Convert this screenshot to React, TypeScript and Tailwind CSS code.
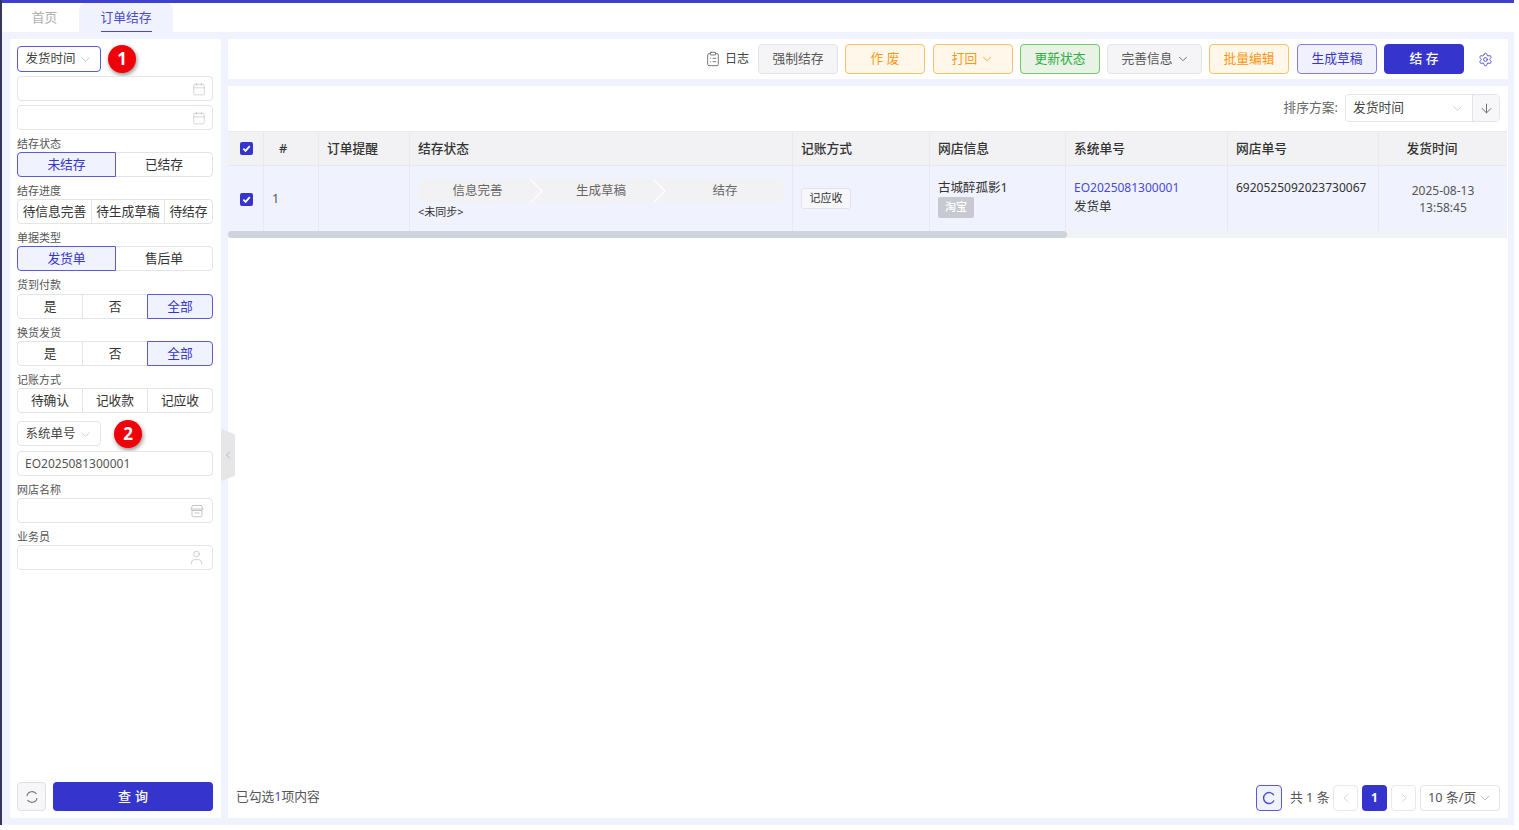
import React from 'react';
import { Calendar, ChevronDown, ChevronLeft, ChevronRight, ArrowDown, Settings, ClipboardList, User } from 'lucide-react';

const FONT = "font-['Noto_Sans','Noto_Sans_CJK_SC',sans-serif]";

const Label: React.FC<{ text: string; cls?: string }> = ({ text, cls }) => (
  <div className={`h-[22px] pt-[7px] text-[11px] leading-[14px] text-[#555] ${cls || ''}`}>{text}</div>
);

interface SegItem {
  text: string;
  width: string;
  active?: boolean;
}

const Segment: React.FC<{ items: SegItem[] }> = ({ items }) => (
  <div className="flex h-[25px] w-[196px] shrink-0">
    {items.map((item, i) => (
      <div
        key={item.text}
        className={`flex items-center justify-center text-[12.75px] border ${item.width} ${i > 0 ? '-ml-px' : ''} ${i === 0 ? 'rounded-l-[4px]' : ''} ${i === items.length - 1 ? 'rounded-r-[4px]' : ''} ${item.active ? 'relative z-10 bg-[#f0f2fe] border-[#5a5ad8] text-[#3535cd]' : 'bg-white border-[#e3e4ea] text-[#333]'}`}
      >
        {item.text}
      </div>
    ))}
  </div>
);

const Field: React.FC<{ children?: React.ReactNode; value?: string }> = ({ children, value }) => (
  <div className="flex h-[25px] w-[196px] shrink-0 items-center justify-between rounded-[4px] border border-[#e3e4ea] bg-white pl-[7px] pr-[8px] text-[12px] text-[#555]">
    <span>{value}</span>
    {children}
  </div>
);

const Badge: React.FC<{ n: string }> = ({ n }) => (
  <div className="flex h-[28px] w-[28px] items-center justify-center rounded-full bg-[#f00008] text-[17px] font-bold text-white shadow-[1px_2px_4px_rgba(0,0,0,0.45)]">
    {n}
  </div>
);

const Btn: React.FC<{ text: string; cls: string; w: string; arrow?: boolean }> = ({ text, cls, w, arrow }) => (
  <div className={`flex h-[30px] items-center justify-center gap-[3px] rounded-[4px] border text-[12.75px] ${w} ${cls}`}>
    {text}
    {arrow && <ChevronDown size={14} strokeWidth={1.4} />}
  </div>
);

const orange = 'bg-[#fff8ea] border-[#ffbf60] text-[#ff9610]';
const gray = 'bg-[#f5f5f7] border-[#e3e4e8] text-[#555]';

const CheckBox: React.FC = () => (
  <div className="flex h-[13px] w-[13px] items-center justify-center rounded-[2px] bg-[#3535cd]">
    <svg width="9" height="9" viewBox="0 0 10 10" fill="none" stroke="white" strokeWidth="2">
      <path d="M1.5 5.2 L4 7.6 L8.6 2.4" />
    </svg>
  </div>
);

const COLS = 'grid grid-cols-[35px_55px_91px_383px_137px_136px_162px_151px_129px]';

const HeadCell: React.FC<{ children: React.ReactNode; cls?: string }> = ({ children, cls }) => (
  <div className={`flex items-center border-l border-[#e8e8ee] pl-2 text-[12.75px] font-medium text-[#333] ${cls || ''}`}>{children}</div>
);

const Cell: React.FC<{ children?: React.ReactNode; cls?: string }> = ({ children, cls }) => (
  <div className={`border-l border-[#e6e8f4] px-2 text-[12.5px] text-[#333] ${cls || ''}`}>{children}</div>
);

const StepSep: React.FC = () => (
  <svg className="absolute top-0 -right-[6px] z-10" width="13" height="24" viewBox="0 0 13 24" fill="none" stroke="#ffffff" strokeWidth="1.2">
    <path d="M0 0 L12 12 L0 24" />
  </svg>
);

const Sidebar: React.FC = () => (
  <aside className="flex w-[211px] shrink-0 flex-col bg-white px-[7px] pt-[7px] pb-[7px]">
    <div className="flex items-center gap-[7px] h-[26px] shrink-0">
      <div className="flex h-[26px] w-[84px] items-center justify-center gap-[2px] rounded-[4px] border border-[#5a5ad8] bg-white text-[12.5px] text-[#444]">
        发货时间 <ChevronDown size={15} strokeWidth={1.1} className="text-[#aaa]" />
      </div>
      <Badge n="1" />
    </div>
    <div className="mt-1"><Field><Calendar size={14} strokeWidth={1.2} className="-mr-[2px] text-[#c4c4c4]" /></Field></div>
    <div className="mt-1"><Field><Calendar size={14} strokeWidth={1.2} className="-mr-[2px] text-[#c4c4c4]" /></Field></div>
    <Label text="结存状态" cls="pt-[6px]" />
    <Segment items={[{ text: '未结存', width: 'w-[99px]', active: true }, { text: '已结存', width: 'w-[98px]' }]} />
    <Label text="结存进度" cls="pt-[6px]" />
    <Segment items={[{ text: '待信息完善', width: 'w-[75px]' }, { text: '待生成草稿', width: 'w-[74px]' }, { text: '待结存', width: 'w-[49px]' }]} />
    <Label text="单据类型" />
    <Segment items={[{ text: '发货单', width: 'w-[99px]', active: true }, { text: '售后单', width: 'w-[98px]' }]} />
    <Label text="货到付款" cls="h-[23px]" />
    <Segment items={[{ text: '是', width: 'w-[66px]' }, { text: '否', width: 'w-[66px]' }, { text: '全部', width: 'w-[66px]', active: true }]} />
    <Label text="换货发货" />
    <Segment items={[{ text: '是', width: 'w-[66px]' }, { text: '否', width: 'w-[66px]' }, { text: '全部', width: 'w-[66px]', active: true }]} />
    <Label text="记账方式" />
    <Segment items={[{ text: '待确认', width: 'w-[66px]' }, { text: '记收款', width: 'w-[66px]' }, { text: '记应收', width: 'w-[66px]' }]} />
    <div className="mt-[8px] flex h-[25px] shrink-0 items-center gap-[13px]">
      <div className="flex h-[25px] w-[84px] items-center justify-center gap-[2px] rounded-[4px] border border-[#e3e4ea] bg-white pt-[1px] text-[12.5px] text-[#444]">
        系统单号 <ChevronDown size={15} strokeWidth={1.1} className="text-[#bbb]" />
      </div>
      <Badge n="2" />
    </div>
    <div className="mt-[5px]"><Field value="EO2025081300001" /></div>
    <Label text="网店名称" />
    <Field>
      <svg width="14" height="14" viewBox="0 0 14 14" fill="none" stroke="#c4c4c4" strokeWidth="1">
        <path d="M2.5 1.5 H11.5 L13 5 Q13 6.5 11 6.5 H3 Q1 6.5 1 5 Z M1 5 H13 M2 6.5 V11.5 Q2 12.8 3.5 12.8 H10.5 Q12 12.8 12 11.5 V6.5 M4.5 9 H9.5" />
      </svg>
    </Field>
    <Label text="业务员" />
    <Field><User size={17} strokeWidth={1} className="-mr-[1px] text-[#bdbdbd]" /></Field>
    <div className="mt-auto flex items-center gap-[7px]">
      <div className="flex h-[29px] w-[29px] items-center justify-center rounded-[4px] border border-[#dfe0e6] bg-[#f7f7f9]">
        <svg width="14" height="14" viewBox="0 0 14 14" fill="none" stroke="#777" strokeWidth="1.2">
          <path d="M2 6 A5.2 5.2 0 0 1 11.5 4 M12 8 A5.2 5.2 0 0 1 2.5 10" />
        </svg>
      </div>
      <div className="flex h-[29px] w-[160px] items-center justify-center rounded-[4px] bg-[#3535cd] pl-[4px] text-[13px] font-medium tracking-[4px] text-white">
        查询
      </div>
    </div>
  </aside>
);

const Toolbar: React.FC = () => (
  <div className="flex h-[40px] shrink-0 items-center bg-white pl-[477px]">
    <div className="flex w-[53px] items-center gap-[4px] text-[12px] text-[#444]">
      <ClipboardList size={16} strokeWidth={1.3} className="text-[#666]" /> 日志
    </div>
    <div className="flex items-center gap-[7px]">
      <Btn text="强制结存" w="w-[80px]" cls={gray} />
      <Btn text="作 废" w="w-[80px]" cls={orange} />
      <Btn text="打回" w="w-[80px] ml-px" cls={orange} arrow />
      <Btn text="更新状态" w="w-[80px]" cls="bg-[#e8f3e6] border-[#6fc66f] text-[#30ad42]" />
      <Btn text="完善信息" w="w-[95px] pl-[2px]" cls={gray} arrow />
      <Btn text="批量编辑" w="w-[80px]" cls={orange} />
      <Btn text="生成草稿" w="w-[80px] ml-px" cls="bg-[#f0f0fe] border-[#8080dc] text-[#3535cd]" />
      <Btn text="结 存" w="w-[80px]" cls="bg-[#3535cd] border-[#3535cd] text-white font-medium" />
    </div>
    <Settings size={15} strokeWidth={1.5} className="ml-[14px] text-[#4a4ad8]" />
  </div>
);

const Table: React.FC = () => (
  <div className="w-[1279px]">
    <div className={`${COLS} h-[35px] border-y border-[#e8e8ee] bg-[#f2f2f4]`}>
      <div className="flex items-center justify-center pl-[1px]"><CheckBox /></div>
      <HeadCell cls="justify-center pl-0 pr-[24px]">#</HeadCell>
      <HeadCell>订单提醒</HeadCell>
      <HeadCell>结存状态</HeadCell>
      <HeadCell>记账方式</HeadCell>
      <HeadCell>网店信息</HeadCell>
      <HeadCell>系统单号</HeadCell>
      <HeadCell>网店单号</HeadCell>
      <HeadCell cls="justify-center pl-0 pr-[30px]">发货时间</HeadCell>
    </div>
    <div className={`${COLS} h-[65px] bg-[#f0f2fe]`}>
      <div className="flex items-center justify-center pl-[1px] pt-[1px]"><CheckBox /></div>
      <Cell cls="flex items-center pt-[1px] text-[#555]">1</Cell>
      <Cell />
      <Cell cls="pt-[13px]">
        <div className="flex h-[24px] w-[368px] rounded-full bg-[#f2f2f5] text-[12.5px] text-[#666]">
          <div className="relative flex w-[119px] items-center justify-center">信息完善<StepSep /></div>
          <div className="relative flex w-[123px] items-center justify-center pl-[5px]">生成草稿<StepSep /></div>
          <div className="flex flex-1 items-center justify-center pl-[4px]">结存</div>
        </div>
        <div className="mt-[2px] text-[11px] leading-[14px]">&lt;未同步&gt;</div>
      </Cell>
      <Cell cls="pt-[22px]">
        <div className="flex h-[21px] w-[50px] items-center justify-center rounded-[3px] border border-[#e3e4ea] bg-[#f7f7fb] text-[11px]">记应收</div>
      </Cell>
      <Cell cls="pt-[14px]">
        <div className="leading-[16px]">古城醉孤影1</div>
        <div className="mt-[1px] flex h-[21px] w-[36px] items-center justify-center rounded-[2px] bg-[#c8c8d0] text-[11px] font-medium text-white">淘宝</div>
      </Cell>
      <Cell cls="pt-[14px] leading-[16px]">
        <div className="text-[12px] text-[#4a4ad0]">EO2025081300001</div>
        <div className="mt-[3px]">发货单</div>
      </Cell>
      <Cell cls="pt-[14px] text-[12px] leading-[16px]">6920525092023730067</Cell>
      <Cell cls="pt-[16px] text-center text-[12px] leading-[17px] text-[#555]">
        <div>2025-08-13</div>
        <div>13:58:45</div>
      </Cell>
    </div>
    <div className="h-[7px] bg-[#f2f3f5]">
      <div className="h-[7px] w-[839px] rounded-full bg-[#ced4dc]" />
    </div>
  </div>
);

const Pagination: React.FC = () => (
  <div className="flex items-center">
    <div className="flex h-[26px] w-[26px] items-center justify-center rounded-[4px] border border-[#5a5ad8] bg-[#f0f2fe]">
      <svg width="14" height="14" viewBox="0 0 14 14" fill="none" stroke="#4a4ad0" strokeWidth="1.4">
        <path d="M11.8 4.2 A5.5 5.5 0 1 0 12 9.5" />
      </svg>
    </div>
    <span className="ml-2 w-[43px] whitespace-nowrap text-[12.75px] text-[#555]">共 1 条</span>
    <div className="flex h-[26px] w-[25px] items-center justify-center rounded-[4px] border border-[#e8e8ee] text-[#ccc]"><ChevronLeft size={16} strokeWidth={1.1} /></div>
    <div className="ml-1 flex h-[26px] w-[25px] items-center justify-center rounded-[4px] bg-[#3535cd] text-[12px] font-bold text-white">1</div>
    <div className="ml-1 flex h-[26px] w-[25px] items-center justify-center rounded-[4px] border border-[#e8e8ee] text-[#ccc]"><ChevronRight size={16} strokeWidth={1.1} /></div>
    <div className="ml-1 flex h-[26px] w-[80px] items-center justify-between rounded-[4px] border border-[#e3e4ea] pl-[7px] pr-[6px] text-[12.75px] text-[#555]">
      10 条/页 <ChevronDown size={16} strokeWidth={1.1} className="text-[#aaa]" />
    </div>
  </div>
);

export default function App() {
  return (
    <div className={`h-[830px] w-[1519px] overflow-hidden bg-white ${FONT}`}>
      <div className="flex h-[825px] w-[1514px] flex-col border-l-[2px] border-l-[#33365e] bg-[#f0f2fe]">
        <div className="h-[3px] shrink-0 bg-[#3f3fd0]" />
        <div className="flex h-[29px] shrink-0 bg-white">
          <div className="flex w-[77px] items-center justify-center pl-[8px] text-[12.75px] text-[#b0b0b0]">首页</div>
          <div className="relative flex w-[94px] items-center justify-center rounded-t-[8px] bg-[#f0f2fe] text-[12.75px] text-[#4a4ad0]">
            订单结存
            <div className="absolute bottom-0 left-[22px] h-[1px] w-[51px] bg-[#4a4ad0]" />
          </div>
        </div>
        <div className="relative flex min-h-0 flex-1 gap-[7px] px-[8px] py-[7px] pr-[6px]">
          <Sidebar />
          <div className="absolute left-[219px] top-[397px] z-10 flex h-[52px] w-[14px] items-center justify-center bg-[#e6e6e8] [clip-path:polygon(0_0,100%_10%,100%_90%,0_100%)]">
            <ChevronLeft size={12} strokeWidth={1.2} className="text-[#999]" />
          </div>
          <main className="flex min-w-0 flex-1 flex-col gap-[7px]">
            <Toolbar />
            <div className="flex min-h-0 flex-1 flex-col bg-white">
              <div className="flex h-[45px] shrink-0 items-start justify-end pr-[8px] pt-[8px]">
                <span className="mr-[7px] mt-[4px] text-[12.75px] text-[#666]">排序方案:</span>
                <div className="flex h-[28px] w-[155px] items-center rounded-[4px] border border-[#e3e4ea] text-[12.75px] text-[#444]">
                  <div className="flex flex-1 items-center justify-between pl-[7px] pr-[7px]">
                    发货时间 <ChevronDown size={15} strokeWidth={1.1} className="text-[#bbb]" />
                  </div>
                  <div className="flex h-full w-[27px] items-center justify-center border-l border-[#e3e4ea] bg-[#f7f7f9]">
                    <ArrowDown size={15} strokeWidth={1.5} className="text-[#666]" />
                  </div>
                </div>
              </div>
              <Table />
              <div className="mt-auto flex h-[33px] shrink-0 items-start justify-between pl-2 pr-[8px]">
                <div className="pt-[1px] text-[12.75px] leading-[20px] text-[#555]">
                  已勾选<span className="text-[#4a4ad0]">1</span>项内容
                </div>
                <Pagination />
              </div>
            </div>
          </main>
        </div>
      </div>
    </div>
  );
}
